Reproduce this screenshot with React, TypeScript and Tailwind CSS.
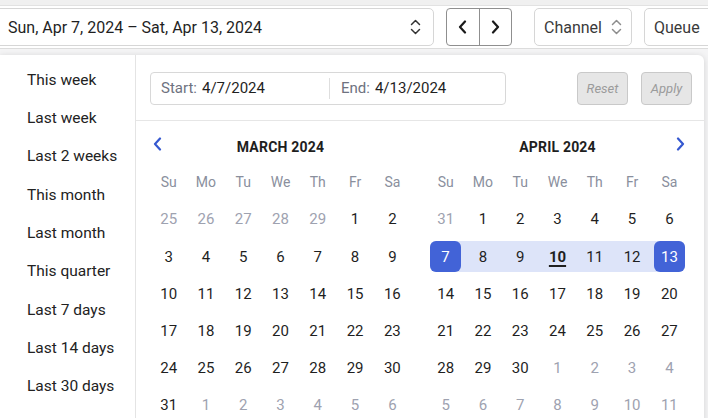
import React from "react";

type Day = { n: number; muted: boolean };

function buildMonth(year: number, month: number): Day[][] {
  const first = new Date(year, month, 1);
  const start = new Date(year, month, 1 - first.getDay());
  const rows: Day[][] = [];
  for (let r = 0; r < 6; r++) {
    const row: Day[] = [];
    for (let c = 0; c < 7; c++) {
      const d = new Date(start);
      d.setDate(start.getDate() + r * 7 + c);
      row.push({ n: d.getDate(), muted: d.getMonth() !== month });
    }
    rows.push(row);
  }
  return rows;
}

const WEEKDAYS = ["Su", "Mo", "Tu", "We", "Th", "Fr", "Sa"];

const PRESETS = [
  "This week",
  "Last week",
  "Last 2 weeks",
  "This month",
  "Last month",
  "This quarter",
  "Last 7 days",
  "Last 14 days",
  "Last 30 days",
];

function UpDown({ className }: { className?: string }) {
  return (
    <svg width="11" height="16" viewBox="0 0 11 16" fill="none" className={className}>
      <path d="M1.5 5.5 L5.5 1.5 L9.5 5.5" stroke="currentColor" strokeWidth="1.5" strokeLinecap="round" strokeLinejoin="round" />
      <path d="M1.5 10.5 L5.5 14.5 L9.5 10.5" stroke="currentColor" strokeWidth="1.5" strokeLinecap="round" strokeLinejoin="round" />
    </svg>
  );
}

function Chevron({ dir, className }: { dir: "left" | "right"; className?: string }) {
  return (
    <svg width="9" height="14" viewBox="0 0 9 14" fill="none" className={className}>
      <path
        d={dir === "left" ? "M7 1.5 L2 7 L7 12.5" : "M2 1.5 L7 7 L2 12.5"}
        stroke="currentColor"
        strokeWidth="2.2"
        strokeLinecap="round"
        strokeLinejoin="round"
      />
    </svg>
  );
}

function MonthGrid({
  title,
  year,
  month,
  nav,
  range,
  today,
}: {
  title: string;
  year: number;
  month: number;
  nav: "left" | "right";
  range?: { start: number; end: number };
  today?: number;
}) {
  const rows = buildMonth(year, month);
  return (
    <div className="w-[261px] shrink-0">
      <div className="relative h-[50px] flex items-center justify-center pt-[2px]">
        <span className="text-[14px] font-bold tracking-[0.2px] text-[#1e1e1e]">{title}</span>
        {nav === "left" ? (
          <Chevron dir="left" className="absolute left-[3px] top-[16px] text-[#3558d0]" />
        ) : (
          <Chevron dir="right" className="absolute right-[3px] top-[16px] text-[#3558d0]" />
        )}
      </div>
      <div className="grid grid-cols-7 h-[22px] items-center">
        {WEEKDAYS.map((w) => (
          <div key={w} className="text-center text-[14px] text-[#8a8f9d]">
            {w}
          </div>
        ))}
      </div>
      <div className="mt-[8px]">
        {rows.map((row, ri) => (
          <div key={ri} className="grid grid-cols-7 h-[37.2px] items-center">
            {row.map((d, ci) => {
              const inMonth = !d.muted;
              const isStart = range && inMonth && d.n === range.start;
              const isEnd = range && inMonth && d.n === range.end;
              const inRange = range && inMonth && d.n > range.start && d.n < range.end;
              const isToday = today !== undefined && inMonth && d.n === today;
              const txt = d.muted ? "text-[#9ea2b0]" : "text-[#1f1f1f]";
              if (isStart) {
                return (
                  <div key={ci} className="ml-[3px] h-[31px] bg-[#dde4f9] rounded-l-[6px]">
                    <div className="w-[31px] h-[31px] rounded-[6px] bg-[#4263d7] text-white text-[15px] flex items-center justify-center">
                      {d.n}
                    </div>
                  </div>
                );
              }
              if (isEnd) {
                return (
                  <div key={ci} className="mr-[3px] h-[31px] bg-[#dde4f9] rounded-r-[6px] flex justify-end">
                    <div className="w-[31px] h-[31px] rounded-[6px] bg-[#4263d7] text-white text-[15px] flex items-center justify-center">
                      {d.n}
                    </div>
                  </div>
                );
              }
              if (inRange) {
                return (
                  <div
                    key={ci}
                    className={`h-[31px] bg-[#dde4f9] flex items-center justify-center text-[15px] ${txt} ${
                      isToday ? "font-bold underline underline-offset-[3px] decoration-[1.5px]" : ""
                    }`}
                  >
                    {d.n}
                  </div>
                );
              }
              return (
                <div key={ci} className={`h-[31px] flex items-center justify-center text-[15px] ${txt}`}>
                  {d.n}
                </div>
              );
            })}
          </div>
        ))}
      </div>
    </div>
  );
}

export default function App() {
  return (
    <div
      className="w-[708px] h-[418px] overflow-hidden bg-[#f4f4f5] text-[#1f1f1f]"
      style={{ fontFamily: "Roboto, 'Liberation Sans', sans-serif" }}
    >
      {/* top strip */}
      <div className="h-[6px] bg-[#f0f0f0] border-b border-[#e2e2e2]" />

      {/* toolbar */}
      <div className="h-[43px] bg-white border-b border-[#dcdcdc] flex items-start pt-[2px] overflow-hidden">
        <div className="shrink-0 -ml-[8px] w-[442px] h-[38px] border border-[#d6d6d6] rounded-[5px] flex items-center pl-[15px] pr-[12px] justify-between">
          <span className="text-[16px] text-[#1f1f1f] pt-[1px]">Sun, Apr 7, 2024 – Sat, Apr 13, 2024</span>
          <UpDown className="text-[#333]" />
        </div>
        <div className="shrink-0 ml-[12px] w-[66px] h-[38px] border border-[#8f8f8f] rounded-[4px] flex">
          <div className="flex-1 flex items-center justify-center border-r border-[#8f8f8f]">
            <Chevron dir="left" className="text-[#1a1a1a]" />
          </div>
          <div className="flex-1 flex items-center justify-center">
            <Chevron dir="right" className="text-[#1a1a1a]" />
          </div>
        </div>
        <div className="shrink-0 ml-[22px] w-[98px] h-[38px] border border-[#d6d6d6] rounded-[5px] flex items-center pl-[9px] gap-[9px]">
          <span className="text-[16px] text-[#3a3a3a] pt-[1px]">Channel</span>
          <UpDown className="text-[#8d8d8d]" />
        </div>
        <div className="shrink-0 ml-[12px] w-[80px] h-[38px] border border-[#d6d6d6] rounded-[5px] flex items-center pl-[9px]">
          <span className="text-[16px] text-[#3a3a3a] pt-[1px]">Queue</span>
        </div>
      </div>

      {/* date range popover */}
      <div className="mt-[6px] w-[704px] h-[380px] bg-white rounded-tr-[6px] shadow-[0_1px_6px_rgba(0,0,0,0.14)] flex">
        <div className="w-[136px] shrink-0 border-r border-[#e4e4e4] pt-[6px]">
          {PRESETS.map((p) => (
            <div key={p} className="h-[38.35px] flex items-center pl-[27px] text-[15.5px] text-[#222]">
              {p}
            </div>
          ))}
        </div>

        <div className="flex-1">
          <div className="h-[66px] border-b border-[#e6e6e6] flex items-center pl-[14px] pr-[12px] pt-[2px]">
            <div className="w-[356px] h-[33px] border border-[#d8d8d8] rounded-[4px] flex items-center text-[15px]">
              <div className="w-[178px] h-full flex items-center pl-[10px]">
                <span className="text-[#6e7280]">Start:</span>
                <span className="ml-[5px] text-[#1f1f1f]">4/7/2024</span>
              </div>
              <div className="w-px h-[21px] bg-[#dedede]" />
              <div className="flex items-center pl-[11px]">
                <span className="text-[#6e7280]">End:</span>
                <span className="ml-[5px] text-[#1f1f1f]">4/13/2024</span>
              </div>
            </div>
            <div className="ml-auto flex gap-[13px]">
              <div className="w-[51px] h-[33px] rounded-[4px] border border-[#c9c9c9] bg-[#e6e6e6] flex items-center justify-center text-[13px] italic text-[#9b9b9b]">
                Reset
              </div>
              <div className="w-[51px] h-[33px] rounded-[4px] border border-[#c9c9c9] bg-[#e6e6e6] flex items-center justify-center text-[13px] italic text-[#9b9b9b]">
                Apply
              </div>
            </div>
          </div>

          <div className="flex pl-[14px] gap-[16px]">
            <MonthGrid title="MARCH 2024" year={2024} month={2} nav="left" />
            <MonthGrid
              title="APRIL 2024"
              year={2024}
              month={3}
              nav="right"
              range={{ start: 7, end: 13 }}
              today={10}
            />
          </div>
        </div>
      </div>
    </div>
  );
}
